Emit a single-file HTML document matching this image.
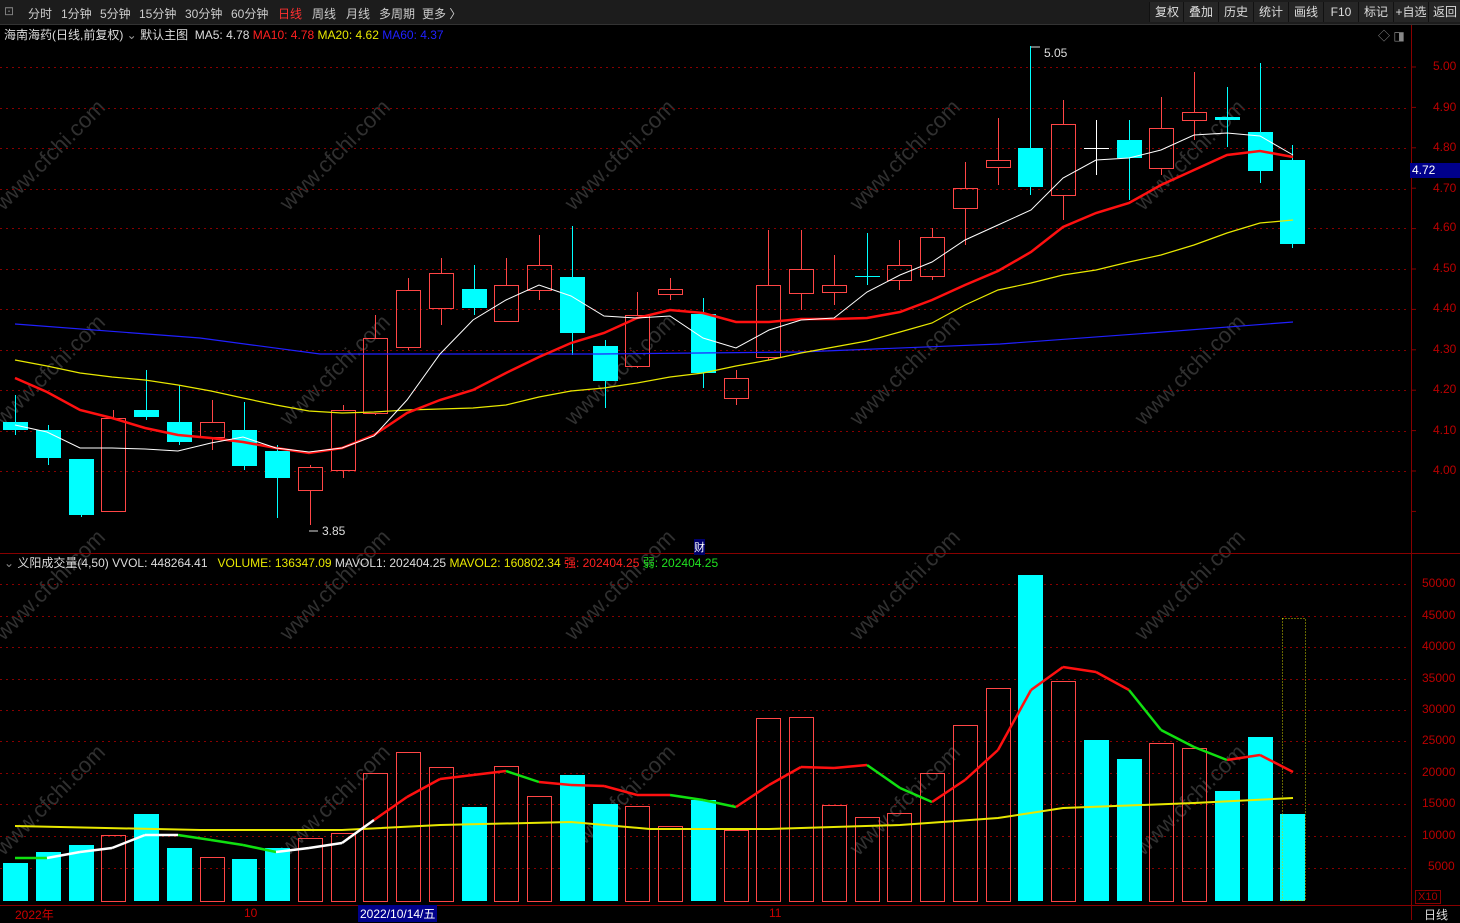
<!DOCTYPE html>
<html><head><meta charset="utf-8"><style>
body{margin:0;background:#000;width:1460px;height:920px;overflow:hidden;font-family:"Liberation Sans","Noto Sans CJK SC",sans-serif;}
#tb{position:absolute;left:0;top:0;width:1460px;height:24px;background:#1c1c1c;border-bottom:1px solid #333;color:#ccc;font-size:12px;}
#tb span{position:absolute;top:5px;}
.btn{position:absolute;top:2px;height:20px;line-height:20px;background:#262626;border-left:1px solid #111;color:#ddd;font-size:12px;text-align:center}
.t{position:absolute;font-size:12px;white-space:nowrap}
svg{position:absolute;left:0;top:0}
</style></head><body>
<svg id="s" width="1460" height="920"></svg>
<div id="tb">
<span style="left:4px;top:4px;color:#888">⊡</span>
<span style="left:28px">分时</span><span style="left:61px">1分钟</span><span style="left:100px">5分钟</span><span style="left:139px">15分钟</span><span style="left:185px">30分钟</span><span style="left:231px">60分钟</span><span style="left:278px;color:#ff3030">日线</span><span style="left:312px">周线</span><span style="left:346px">月线</span><span style="left:379px">多周期</span><span style="left:422px">更多 〉</span>
<div class="btn" style="left:1149px;width:34px">复权</div><div class="btn" style="left:1183px;width:34px">叠加</div><div class="btn" style="left:1218px;width:34px">历史</div><div class="btn" style="left:1253px;width:34px">统计</div><div class="btn" style="left:1288px;width:34px">画线</div><div class="btn" style="left:1323px;width:34px">F10</div><div class="btn" style="left:1358px;width:34px">标记</div><div class="btn" style="left:1393px;width:34px">+自选</div><div class="btn" style="left:1428px;width:32px">返回</div>
</div>
<div class="t" style="left:4px;top:26px;color:#ddd">海南海药(日线,前复权) <span style="color:#999">⌄</span> 默认主图 &nbsp;MA5: 4.78 <span style="color:#ff2020">MA10: 4.78</span> <span style="color:#e8e800">MA20: 4.62</span> <span style="color:#2020ff">MA60: 4.37</span></div>
<div class="t" style="left:1378px;top:27px;color:#888">◇ ◨</div>
<div class="t" style="left:4px;top:554px;color:#ddd"><span style="color:#888">⌄</span> 义阳成交量(4,50) VVOL: 448264.41 &nbsp; <span style="color:#e8e800">VOLUME: 136347.09</span> MAVOL1: 202404.25 <span style="color:#e8e800">MAVOL2: 160802.34</span> <span style="color:#ff2020">强: 202404.25</span> <span style="color:#20e020">弱: 202404.25</span></div>
<div class="t" style="left:694px;top:539px;color:#fff;background:#00006a;font-size:11px">财</div>
<div class="t" style="left:1044px;top:46px;color:#ddd">5.05</div>
<div class="t" style="left:322px;top:524px;color:#ddd">3.85</div>
<div class="t" style="left:1410px;top:163px;width:50px;height:15px;line-height:15px;background:#00008b;color:#fff;padding-left:2px">4.72</div>
<div class="t" style="left:15px;top:906px;color:#c00">2022年</div>
<div class="t" style="left:244px;top:906px;color:#c00">10</div>
<div class="t" style="left:358px;top:905px;color:#fff;background:#00008b;padding:0 2px">2022/10/14/五</div>
<div class="t" style="left:769px;top:906px;color:#c00">11</div>
<div class="t" style="left:1424px;top:906px;color:#ddd">日线</div>
<div class="t" style="left:1415px;top:890px;color:#a00;border:1px solid #800;padding:0 2px;font-size:11px">X10</div>
<div class="t" style="left:1433px;top:59px;color:#b00">5.00</div><div class="t" style="left:1433px;top:100px;color:#b00">4.90</div><div class="t" style="left:1433px;top:140px;color:#b00">4.80</div><div class="t" style="left:1433px;top:181px;color:#b00">4.70</div><div class="t" style="left:1433px;top:220px;color:#b00">4.60</div><div class="t" style="left:1433px;top:261px;color:#b00">4.50</div><div class="t" style="left:1433px;top:301px;color:#b00">4.40</div><div class="t" style="left:1433px;top:342px;color:#b00">4.30</div><div class="t" style="left:1433px;top:382px;color:#b00">4.20</div><div class="t" style="left:1433px;top:423px;color:#b00">4.10</div><div class="t" style="left:1433px;top:463px;color:#b00">4.00</div>
<div class="t" style="left:1422px;top:576px;color:#b00">50000</div><div class="t" style="left:1422px;top:608px;color:#b00">45000</div><div class="t" style="left:1422px;top:639px;color:#b00">40000</div><div class="t" style="left:1422px;top:671px;color:#b00">35000</div><div class="t" style="left:1422px;top:702px;color:#b00">30000</div><div class="t" style="left:1422px;top:733px;color:#b00">25000</div><div class="t" style="left:1422px;top:765px;color:#b00">20000</div><div class="t" style="left:1422px;top:796px;color:#b00">15000</div><div class="t" style="left:1422px;top:828px;color:#b00">10000</div><div class="t" style="left:1428px;top:859px;color:#b00">5000</div>
<script>
var s=document.getElementById('s'),h='';
function L(x1,y1,x2,y2,c,w,d){h+='<line x1="'+x1+'" y1="'+y1+'" x2="'+x2+'" y2="'+y2+'" stroke="'+c+'" stroke-width="'+(w||1)+'"'+(d?' stroke-dasharray="'+d+'"':'')+'/>';}
function R(x,y,w,hh,f,st,d){h+='<rect x="'+x+'" y="'+y+'" width="'+w+'" height="'+hh+'" fill="'+f+'"'+(st?' stroke="'+st+'"':'')+(d?' stroke-dasharray="'+d+'"':'')+'/>';}
function P(pts,c,w){h+='<polyline fill="none" stroke="'+c+'" stroke-width="'+w+'" points="'+pts.map(p=>p.join(',')).join(' ')+'"/>';}
for(var i=0;i<5;i++)for(var j=0;j<4;j++){var cx=55+i*285,cy=160+j*215;h+='<text x="'+cx+'" y="'+cy+'" fill="#303030" font-size="22" font-family="Liberation Sans" text-anchor="middle" transform="rotate(-45 '+cx+' '+cy+')">www.cfchi.com</text>';}
[67,108,148,189,228,269,309,350,390,431,471].forEach(y=>L(0,y+.5,1408,y+.5,'#800','1','2,4'));
[584,616,647,679,710,741,773,804,836,868].forEach(y=>L(0,y+.5,1408,y+.5,'#800','1','2,4'));
L(1411.5,25,1411.5,920,'#800',1);L(0,553.5,1460,553.5,'#800',1);L(0,905.5,1460,905.5,'#800',1);
for(var y=67;y<540;y+=40.4)L(1411,y,1416,y,'#800',1);
var xs=[];for(var k=0;k<40;k++)xs.push(Math.round(15+k*32.75));
var C=[[1,422,430,395,435],[1,430,458,425,465],[1,459,515,459,517],[0,418,511,410,511],[1,410,417,370,420],[1,422,442,385,445],[0,422,437,400,450],[1,430,466,402,470],[1,451,478,445,518],[0,467,490,465,525],[0,410,470,405,478],[0,338,413,315,415],[0,290,347,278,350],[0,273,308,258,325],[1,289,308,265,315],[0,285,321,258,322],[0,265,290,235,300],[1,277,333,226,355],[1,346,381,340,408],[0,315,366,292,368],[0,289,294,278,300],[1,314,373,298,388],[0,378,398,370,405],[0,285,357,230,360],[0,269,293,230,310],[0,285,292,255,305],[2,276,277,233,285],[0,265,280,240,290],[0,237,276,228,280],[0,188,208,162,245],[0,160,167,118,185],[1,148,187,46,195],[0,124,195,100,220],[3,148,149,120,175],[1,140,158,120,200],[0,128,168,97,175],[0,112,120,72,140],[1,117,120,87,147],[1,132,171,63,183],[1,160,244,145,248]];
C.forEach((c,k)=>{var x=xs[k],col=c[0]==0?'#ff4646':(c[0]==3?'#fff':'#00ffff');
 if(c[0]==0){L(x+.5,c[3],x+.5,c[1],col);L(x+.5,c[2],x+.5,c[4],col);R(x-11.5,c[1]+.5,24,c[2]-c[1],'none',col);}
 else if(c[0]==1){L(x+.5,c[3],x+.5,c[4],col);R(x-12,c[1],25,Math.max(c[2]-c[1],3),col);}
 else {L(x+.5,c[3],x+.5,c[4],col);L(x-12,c[1]+.5,x+13,c[1]+.5,col);}
});
L(1031,47,1040,47,'#ddd');L(309,531,318,531,'#ddd');
P([[15,324],[200,338],[320,354],[600,354],[800,352],[1000,344],[1150,333],[1293,322]],'#2020ff',1.2);
P([[15,360],[47,366],[80,373],[112,377],[145,380],[178,385],[211,391],[243,398],[276,405],[309,411],[342,413],[374,412],[407,410],[440,409],[473,408],[506,405],[539,397],[571,391],[604,388],[637,383],[670,377],[703,373],[736,366],[769,360],[801,353],[834,347],[867,341],[900,332],[932,323],[965,305],[998,290],[1031,283],[1063,275],[1096,270],[1129,262],[1161,255],[1194,245],[1227,233],[1260,223],[1293,220]],'#e8e800',1.2);
P([[15,378],[47,392],[80,410],[112,418],[145,428],[178,435],[211,438],[243,442],[276,448],[309,453],[342,448],[374,435],[407,413],[440,400],[473,390],[506,373],[539,357],[571,343],[604,333],[637,318],[670,310],[703,313],[736,322],[769,322],[801,319],[834,319],[867,318],[900,312],[932,300],[965,285],[998,271],[1031,252],[1063,227],[1096,213],[1129,203],[1161,185],[1194,170],[1227,155],[1260,151],[1293,157]],'#ff1010',2.5);
P([[15,425],[47,432],[80,448],[112,448],[145,449],[178,451],[211,443],[243,437],[276,448],[309,452],[342,448],[374,436],[407,400],[440,354],[473,320],[506,300],[539,285],[571,296],[604,316],[637,318],[670,316],[703,338],[736,348],[769,330],[801,320],[834,318],[867,292],[900,275],[932,262],[965,240],[998,225],[1031,210],[1063,178],[1096,160],[1129,158],[1161,150],[1194,135],[1227,133],[1260,136],[1293,155]],'#fff',1);
var V=[[1,863],[1,852],[1,845],[0,835],[1,814],[1,848],[0,857],[1,859],[1,848],[0,838],[0,833],[0,773],[0,752],[0,767],[1,807],[0,766],[0,796],[1,775],[1,804],[0,806],[0,826],[1,800],[0,830],[0,718],[0,717],[0,805],[0,817],[0,813],[0,773],[0,725],[0,688],[1,575],[0,681],[1,740],[1,759],[0,743],[0,748],[1,791],[1,737],[1,814]];
V.forEach((v,k)=>{var x=xs[k];if(v[0])R(x-12,v[1],25,901-v[1],'#00ffff');else R(x-11.5,v[1]+.5,24,901-v[1],'none','#ff4646');});
R(1282.5,618.5,23,282,'none','#cc0','1,2');
var m1=[[15,858],[47,858],[80,852],[112,848],[145,835],[178,835],[211,840],[243,845],[276,852],[309,848],[342,843],[374,820],[407,797],[440,779],[473,775],[506,771],[539,782],[571,785],[604,786],[637,795],[670,795],[703,800],[736,807],[769,785],[801,767],[834,768],[867,765],[900,788],[932,802],[965,780],[998,750],[1031,690],[1063,667],[1096,672],[1129,690],[1161,730],[1194,747],[1227,760],[1260,755],[1293,772]];
P([[15,826],[200,830],[342,830],[440,825],[571,822],[650,829],[769,829],[900,825],[998,818],[1063,808],[1194,803],[1293,798]],'#e8e800',2);
var cols='gwwwwgggwwwrrrrgrrrrggrrrrggrrrrrrgggrr';
var cm={g:'#10e010',w:'#fff',r:'#ff1010'};
for(var k=0;k<m1.length-1;k++)P([m1[k],m1[k+1]],cm[cols[k]],2.5);
s.innerHTML=h;
</script>
</body></html>
